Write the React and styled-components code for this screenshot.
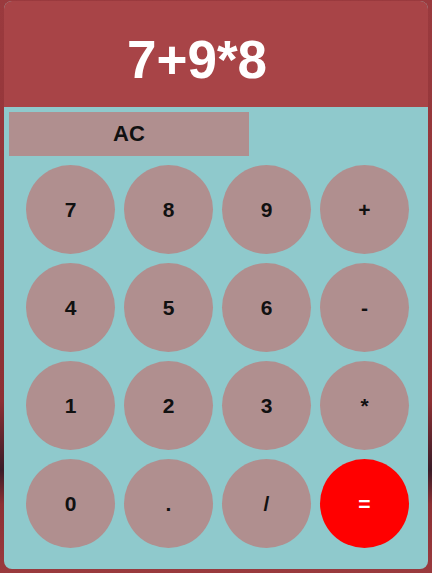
import React from 'react'
import styled, { createGlobalStyle } from 'styled-components'

const GlobalStyle = createGlobalStyle`
    body {
        margin: 0;
        background: linear-gradient(180deg, #9a3a3e 0%, #8d3034 70%, #3a1c28 82%, #8d3034 88%, #9a3a3e 100%);
        font-family: "Liberation Sans", Arial, sans-serif;
        height: 573px;
        overflow: hidden;
    }
`

const Page = styled.div`
    padding: 1px 4px 0 4px;
`

const Card = styled.div`
    width: 424px;
    height: 568px;
    border-radius: 8px;
    overflow: hidden;
    background-color: #8fc9cc;
    display: flex;
    flex-direction: column;
`

const Display = styled.header`
    height: 106px;
    background-color: #a84447;
    display: flex;
    align-items: center;
    padding: 10px 0 0 123px;
    box-sizing: border-box;
    color: white;
    font-weight: bold;
    font-size: 53px;
`

const Body = styled.div`
    padding: 5px 19px 20px 5px;
    display: flex;
    flex-direction: column;
`

const Clear = styled.button`
    width: 240px;
    height: 44px;
    border: none;
    background-color: #b08f8f;
    font-family: inherit;
    font-weight: bold;
    font-size: 22px;
    color: #111;
    padding: 0;
`

const Keys = styled.div`
    display: grid;
    grid-template-columns: repeat(4, 89px);
    grid-auto-rows: 89px;
    gap: 9px;
    margin: 9px 0 0 17px;
`

const Key = styled.button`
    border: none;
    border-radius: 50%;
    background-color: ${p => p.equal ? '#ff0000' : '#b08f8f'};
    color: ${p => p.equal ? 'white' : '#111'};
    font-family: inherit;
    font-weight: bold;
    font-size: 21px;
    padding: 0;
`

const keys = ['7', '8', '9', '+', '4', '5', '6', '-', '1', '2', '3', '*', '0', '.', '/', '=']

export default function App(){
    return(
        <Page>
            <GlobalStyle />
            <Card>
                <Display>7+9*8</Display>
                <Body>
                    <Clear>AC</Clear>
                    <Keys>
                        {keys.map(k => (
                            <Key key={k} equal={k === '=' ? 1 : 0}>{k}</Key>
                        ))}
                    </Keys>
                </Body>
            </Card>
        </Page>
    )
}
